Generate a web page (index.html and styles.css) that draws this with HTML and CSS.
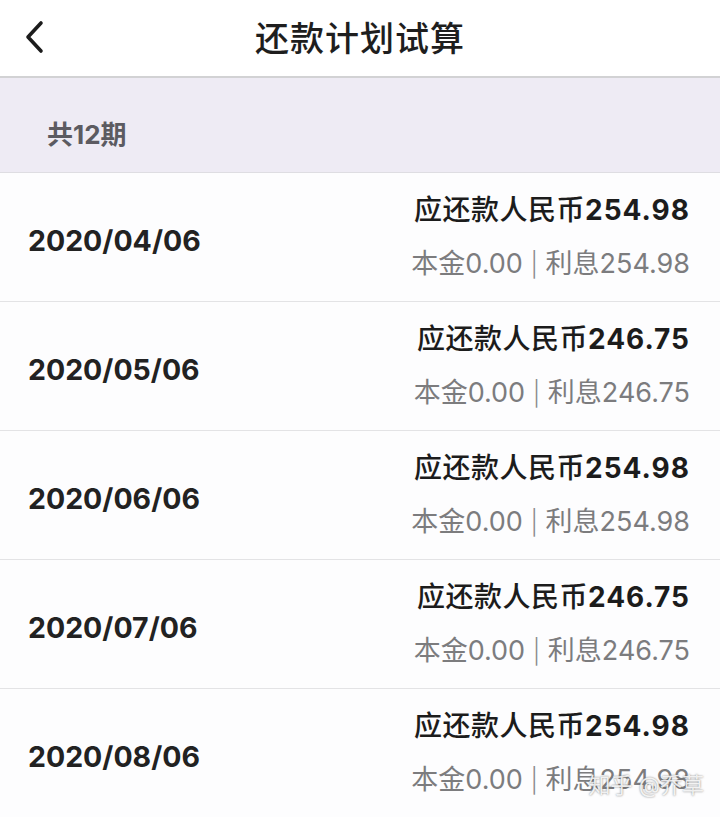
FILE: index.html
```html
<!DOCTYPE html>
<html lang="zh-CN">
<head>
<meta charset="utf-8">
<title>还款计划试算</title>
<link rel="stylesheet" href="styles.css">
</head>
<body>
<div class="page">
  <header class="topbar">
    <span class="back">
      <svg width="20" height="34" viewBox="0 0 20 34"><path d="M17 3 L4 17 L17 31" fill="none" stroke="#1c1c1c" stroke-width="3.6" stroke-linecap="round" stroke-linejoin="round"/></svg>
    </span>
    <h1 class="title">还款计划试算</h1>
  </header>
  <div class="band">共12期</div>
  <ul class="list">
    <li class="row">
      <span class="date">2020/04/06</span>
      <div class="amounts">
        <div class="due">应还款人民币<b>254.98</b></div>
        <div class="detail">本金0.00 <span class="sep">|</span> 利息254.98</div>
      </div>
    </li>
    <li class="row">
      <span class="date">2020/05/06</span>
      <div class="amounts">
        <div class="due">应还款人民币<b>246.75</b></div>
        <div class="detail">本金0.00 <span class="sep">|</span> 利息246.75</div>
      </div>
    </li>
    <li class="row">
      <span class="date">2020/06/06</span>
      <div class="amounts">
        <div class="due">应还款人民币<b>254.98</b></div>
        <div class="detail">本金0.00 <span class="sep">|</span> 利息254.98</div>
      </div>
    </li>
    <li class="row">
      <span class="date">2020/07/06</span>
      <div class="amounts">
        <div class="due">应还款人民币<b>246.75</b></div>
        <div class="detail">本金0.00 <span class="sep">|</span> 利息246.75</div>
      </div>
    </li>
    <li class="row">
      <span class="date">2020/08/06</span>
      <div class="amounts">
        <div class="due">应还款人民币<b>254.98</b></div>
        <div class="detail">本金0.00 <span class="sep">|</span> 利息254.98</div>
      </div>
    </li>
  </ul>
  <div class="watermark">知乎 @乔草</div>
</div>
</body>
</html>
```
FILE: styles.css
```css
* { box-sizing: border-box; }
html, body { margin: 0; padding: 0; }
body {
  width: 720px;
  height: 817px;
  overflow: hidden;
  background: #fdfdfe;
  font-family: Inter, "Noto Sans CJK SC", sans-serif;
  color: #1e1e1e;
}
.page { position: relative; width: 720px; height: 817px; overflow: hidden; }
.topbar {
  position: relative;
  height: 78px;
  background: #ffffff;
  border-bottom: 2px solid #d2d2d4;
  display: flex;
  align-items: center;
  justify-content: center;
}
.back {
  position: absolute;
  left: 24px;
  top: 20px;
  width: 20px;
  height: 34px;
}
.back svg { display: block; }
.title {
  margin: 0;
  margin-top: -4px;
  font-size: 34px;
  font-weight: 500;
  color: #1e1e1e;
  letter-spacing: 1px;
}
.band {
  height: 95px;
  background: #eeebf4;
  border-bottom: 1px solid #dedde2;
  display: flex;
  align-items: center;
  padding-left: 47px;
  padding-top: 14px;
  font-size: 26px;
  font-weight: 700;
  color: #5c5b61;
}
.list { list-style: none; margin: 0; padding: 0; }
.row {
  height: 129px;
  border-bottom: 1px solid #e3e3e5;
  display: flex;
  align-items: center;
  justify-content: space-between;
  padding: 0 30px 0 28px;
  background: #fdfdfe;
}
.date {
  font-size: 28.5px;
  font-weight: 700;
  color: #222222;
  letter-spacing: 0;
  padding-top: 6px;
}
.amounts {
  display: flex;
  flex-direction: column;
  align-items: flex-end;
  gap: 14px;
  margin-top: 0;
}
.due {
  font-size: 28px;
  line-height: 40px;
  font-weight: 500;
  color: #1c1c1c;
  letter-spacing: 0.5px;
}
.due b { font-weight: 700; letter-spacing: 1px; }
.detail {
  font-size: 27px;
  line-height: 40px;
  font-weight: 400;
  color: #7c7c7e;
  letter-spacing: 0;
}
.sep {
  font-size: 24px;
  font-weight: 300;
  color: #8a8a8c;
}
.watermark {
  position: absolute;
  right: 16px;
  bottom: 18px;
  font-size: 22px;
  color: rgba(255,255,255,0.85);
  text-shadow: 0 0 2px rgba(90,90,90,0.8);
  letter-spacing: 0;
}
```
